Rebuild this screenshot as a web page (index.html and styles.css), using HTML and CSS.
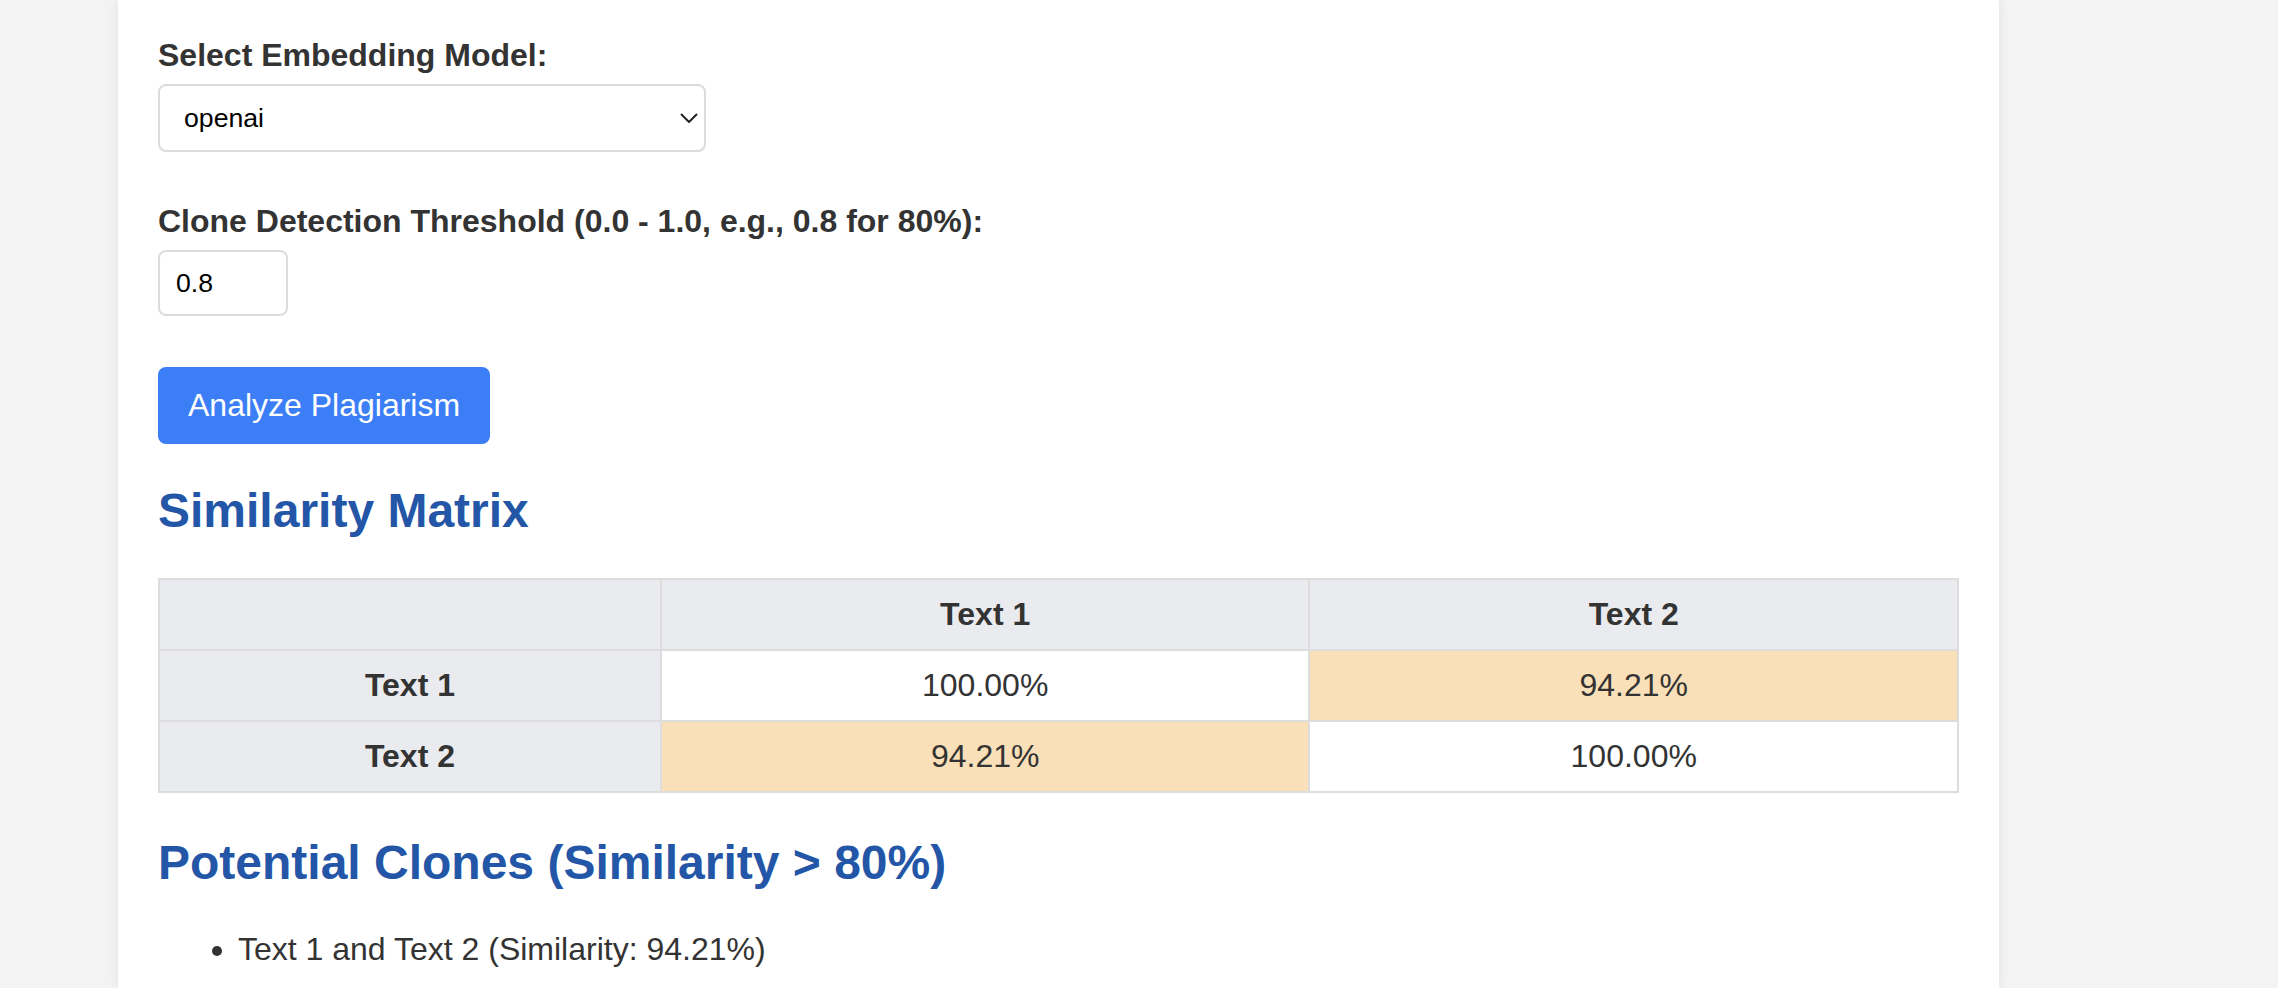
FILE: index.html
```html
<!DOCTYPE html>
<html lang="en">
<head>
<meta charset="utf-8">
<title>Plagiarism Detector</title>
<link rel="stylesheet" href="styles.css">
</head>
<body>
<div class="page">
  <main class="card">
    <div class="form-group">
      <label class="field-label" for="model">Select Embedding Model:</label>
      <div class="select-wrap">
        <select id="model" class="select">
          <option>openai</option>
        </select>
        <svg class="chevron" width="18" height="10" viewBox="0 0 18 10"><polyline points="1,1 9,9 17,1" fill="none" stroke="#222" stroke-width="2"/></svg>
      </div>
    </div>
    <div class="form-group">
      <label class="field-label" for="threshold">Clone Detection Threshold (0.0 - 1.0, e.g., 0.8 for 80%):</label>
      <input id="threshold" class="num-input" type="text" value="0.8">
    </div>
    <button class="btn">Analyze Plagiarism</button>

    <h2 class="section-title">Similarity Matrix</h2>
    <table class="matrix">
      <colgroup><col class="col-head"><col class="col-val"><col class="col-val"></colgroup>
      <thead>
        <tr><th></th><th>Text 1</th><th>Text 2</th></tr>
      </thead>
      <tbody>
        <tr><th>Text 1</th><td>100.00%</td><td class="hit">94.21%</td></tr>
        <tr><th>Text 2</th><td class="hit">94.21%</td><td>100.00%</td></tr>
      </tbody>
    </table>

    <h2 class="section-title section-title--after-table">Potential Clones (Similarity &gt; 80%)</h2>
    <ul class="clones">
      <li>Text 1 and Text 2 (Similarity: 94.21%)</li>
    </ul>
  </main>
</div>
</body>
</html>
```
FILE: styles.css
```css
html, body {
  margin: 0;
  padding: 0;
}
body {
  background: #f3f3f3;
  font-family: "Liberation Sans", Arial, Helvetica, sans-serif;
  color: #333;
  overflow: hidden;
}
.page {
  padding-left: 118px;
}
.card {
  box-sizing: border-box;
  width: 1881px;
  min-height: 988px;
  background: #fff;
  box-shadow: 0 0 10px rgba(0, 0, 0, 0.08);
  padding: 37px 40px 0 40px;
}
.form-group {
  margin-bottom: 51px;
}
.field-label {
  display: block;
  font-size: 32px;
  font-weight: bold;
  line-height: 36px;
  margin-bottom: 11px;
  color: #333;
}
.select-wrap {
  position: relative;
  display: inline-block;
  vertical-align: top;
}
.select {
  -webkit-appearance: none;
  appearance: none;
  box-sizing: border-box;
  width: 548px;
  height: 68px;
  border: 2px solid #dcdcdc;
  border-radius: 8px;
  background: #fff;
  padding: 0 40px 0 24px;
  font-family: "Liberation Sans", Arial, Helvetica, sans-serif;
  font-size: 26.67px;
  color: #000;
  display: block;
}
.chevron {
  position: absolute;
  right: 8px;
  top: 29px;
  pointer-events: none;
}
.num-input {
  box-sizing: border-box;
  display: block;
  width: 130px;
  height: 66px;
  border: 2px solid #dcdcdc;
  border-radius: 8px;
  padding: 0 16px;
  font-family: "Liberation Sans", Arial, Helvetica, sans-serif;
  font-size: 26.67px;
  color: #000;
  background: #fff;
}
.btn {
  display: block;
  border: 0;
  border-radius: 8px;
  background: #3b7ef5;
  color: #fff;
  font-family: "Liberation Sans", Arial, Helvetica, sans-serif;
  font-size: 32px;
  line-height: 37px;
  padding: 20px 30px;
  margin: 0;
  cursor: pointer;
}
.section-title {
  color: #2456a8;
  font-size: 48px;
  font-weight: bold;
  line-height: 54px;
  margin: 40px 0;
}
.section-title--after-table {
  margin-top: 43px;
  margin-bottom: 41px;
}
.matrix {
  width: 100%;
  table-layout: fixed;
  border-collapse: collapse;
  border: 2px solid #dddddd;
  font-size: 32px;
}
.col-head {
  width: 27.9%;
}
.col-val {
  width: 36.05%;
}
.matrix th,
.matrix td {
  border: 2px solid #dddddd;
  padding: 16px;
  line-height: 37px;
  text-align: center;
  color: #333;
}
.matrix th {
  background: #e9ebef;
  font-weight: bold;
}
.matrix td {
  background: #fff;
  font-weight: normal;
}
.matrix td.hit {
  background: #fae0b8;
}
.clones {
  margin: 0;
  padding-left: 80px;
  font-size: 32px;
  line-height: 37px;
  color: #333;
}
```
